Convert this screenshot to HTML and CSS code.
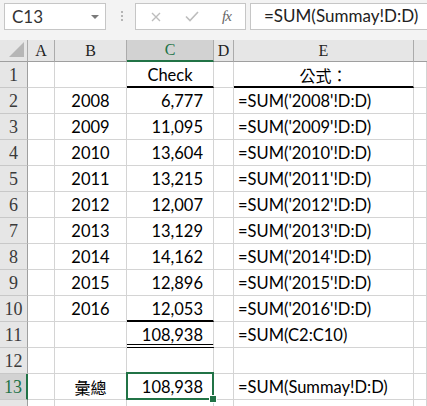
FILE: index.html
```html
<!DOCTYPE html>
<html lang="zh-Hant">

<head>
  <meta charset="UTF-8">
  <meta name="viewport" content="width=device-width, initial-scale=1.0">
  <title>彙總</title>
  <link rel="stylesheet" href="styles.css">
</head>

<body>
  <div class="formula-bar">
    <div class="name-box">
      <span>C13</span>
      <svg class="name-arrow" width="8" height="4" viewBox="0 0 8 4"><path d="M0 0h8L4 4z" fill="#7a7a7a"/></svg>
    </div>
    <svg class="grip" width="3" height="12" viewBox="0 0 3 12">
      <rect x="0" y="0" width="2" height="2" fill="#b5b5b5"/>
      <rect x="0" y="4" width="2" height="2" fill="#b5b5b5"/>
      <rect x="0" y="8" width="2" height="2" fill="#b5b5b5"/>
    </svg>
    <div class="fx-buttons">
      <svg class="btn-cancel" width="10" height="10" viewBox="0 0 10 10">
        <path d="M1 1l8 8M9 1l-8 8" stroke="#bdbdbd" stroke-width="1.4" fill="none"/>
      </svg>
      <svg class="btn-enter" width="14" height="11" viewBox="0 0 14 11">
        <path d="M1 5.5l4 4L13 1" stroke="#bdbdbd" stroke-width="1.6" fill="none"/>
      </svg>
      <span class="btn-fx">fx</span>
    </div>
    <div class="formula-input">=SUM(Summay!D:D)</div>
  </div>

  <div class="sheet">
    <!-- column headers -->
    <div class="corner"><svg width="15" height="15" viewBox="0 0 15 15"><path d="M15 0v15H0z" fill="#b6b6b6"/></svg></div>
    <div class="col-head">A</div>
    <div class="col-head">B</div>
    <div class="col-head active">C</div>
    <div class="col-head">D</div>
    <div class="col-head">E</div>
    <div class="col-head last"></div>

    <!-- row 1 -->
    <div class="row-head">1</div>
    <div class="cell"></div>
    <div class="cell"></div>
    <div class="cell center line-bottom">Check</div>
    <div class="cell"></div>
    <div class="cell center cjk line-bottom">公式：</div>
    <div class="cell"></div>

    <div class="row-head">2</div>
    <div class="cell"></div>
    <div class="cell center">2008</div>
    <div class="cell num">6,777</div>
    <div class="cell"></div>
    <div class="cell">=SUM('2008'!D:D)</div>
    <div class="cell"></div>

    <div class="row-head">3</div>
    <div class="cell"></div>
    <div class="cell center">2009</div>
    <div class="cell num">11,095</div>
    <div class="cell"></div>
    <div class="cell">=SUM('2009'!D:D)</div>
    <div class="cell"></div>

    <div class="row-head">4</div>
    <div class="cell"></div>
    <div class="cell center">2010</div>
    <div class="cell num">13,604</div>
    <div class="cell"></div>
    <div class="cell">=SUM('2010'!D:D)</div>
    <div class="cell"></div>

    <div class="row-head">5</div>
    <div class="cell"></div>
    <div class="cell center">2011</div>
    <div class="cell num">13,215</div>
    <div class="cell"></div>
    <div class="cell">=SUM('2011'!D:D)</div>
    <div class="cell"></div>

    <div class="row-head">6</div>
    <div class="cell"></div>
    <div class="cell center">2012</div>
    <div class="cell num">12,007</div>
    <div class="cell"></div>
    <div class="cell">=SUM('2012'!D:D)</div>
    <div class="cell"></div>

    <div class="row-head">7</div>
    <div class="cell"></div>
    <div class="cell center">2013</div>
    <div class="cell num">13,129</div>
    <div class="cell"></div>
    <div class="cell">=SUM('2013'!D:D)</div>
    <div class="cell"></div>

    <div class="row-head">8</div>
    <div class="cell"></div>
    <div class="cell center">2014</div>
    <div class="cell num">14,162</div>
    <div class="cell"></div>
    <div class="cell">=SUM('2014'!D:D)</div>
    <div class="cell"></div>

    <div class="row-head">9</div>
    <div class="cell"></div>
    <div class="cell center">2015</div>
    <div class="cell num">12,896</div>
    <div class="cell"></div>
    <div class="cell">=SUM('2015'!D:D)</div>
    <div class="cell"></div>

    <div class="row-head">10</div>
    <div class="cell"></div>
    <div class="cell center">2016</div>
    <div class="cell num line-bottom">12,053</div>
    <div class="cell"></div>
    <div class="cell">=SUM('2016'!D:D)</div>
    <div class="cell"></div>

    <div class="row-head">11</div>
    <div class="cell"></div>
    <div class="cell"></div>
    <div class="cell num double-bottom">108,938</div>
    <div class="cell"></div>
    <div class="cell">=SUM(C2:C10)</div>
    <div class="cell"></div>

    <div class="row-head">12</div>
    <div class="cell"></div>
    <div class="cell"></div>
    <div class="cell"></div>
    <div class="cell"></div>
    <div class="cell"></div>
    <div class="cell"></div>

    <div class="row-head active">13</div>
    <div class="cell"></div>
    <div class="cell center cjk">彙總</div>
    <div class="cell num selected">108,938</div>
    <div class="cell"></div>
    <div class="cell">=SUM(Summay!D:D)</div>
    <div class="cell"></div>

    <!-- next row, only its top edge shows -->
    <div class="row-head"></div>
    <div class="cell"></div>
    <div class="cell"></div>
    <div class="cell"></div>
    <div class="cell"></div>
    <div class="cell"></div>
    <div class="cell"></div>
  </div>
</body>

</html>
```

FILE: styles.css
```css
* {
  box-sizing: border-box;
}

body {
  margin: 0;
  height: 100vh;
  overflow: hidden;
  background-color: #f3f3f3;
  font-family: Lato, "Noto Sans CJK TC", sans-serif;
}

/* name box + formula input */
.formula-bar {
  display: flex;
  align-items: flex-start;
  height: 40px;
  padding: 3px 0 0 4px;
}

.name-box {
  display: flex;
  align-items: center;
  justify-content: space-between;
  width: 102px;
  height: 27px;
  padding: 0 6px 0 7px;
  background-color: #fff;
  border: 1px solid #c6c6c6;
  font-size: 17px;
  color: #333;
}

.grip {
  margin: 8px 0 0 15px;
}

.fx-buttons {
  display: flex;
  align-items: center;
  width: 111px;
  height: 27px;
  margin-left: 11px;
  background-color: #fff;
  border: 1px solid #c6c6c6;
}

.btn-cancel {
  margin-left: 15px;
}

.btn-enter {
  margin-left: 24px;
}

.btn-fx {
  margin-left: 23px;
  font-family: "Liberation Serif", serif;
  font-style: italic;
  font-size: 15px;
  color: #666;
  letter-spacing: -1px;
}

.formula-input {
  flex-grow: 1;
  height: 27px;
  margin-left: 4px;
  margin-right: -10px;
  padding: 1px 0 0 13px;
  background-color: #fff;
  border: 1px solid #c6c6c6;
  font-size: 17px;
  color: #222;
  white-space: nowrap;
}

/* worksheet grid */
.sheet {
  display: grid;
  grid-template-columns: 28px 27px 72px 87px 20px 180px 1fr;
  grid-template-rows: 22px repeat(14, 26px);
  background-color: #fff;
}

.corner,
.col-head {
  display: flex;
  align-items: center;
  justify-content: center;
  background-color: #e6e6e6;
  border-right: 1px solid #ababab;
  border-bottom: 1px solid #9f9f9f;
  font-family: "Liberation Serif", serif;
  font-size: 16px;
  color: #222;
}

.corner {
  align-items: flex-end;
  justify-content: flex-end;
  padding: 0 3px 4px 0;
}

.col-head.last {
  border-right: none;
}

.col-head.active {
  background-color: #d2d2d2;
  color: #217346;
  border-bottom: 2px solid #217346;
}

.row-head {
  display: flex;
  align-items: center;
  justify-content: center;
  background-color: #e6e6e6;
  border-right: 1px solid #9f9f9f;
  border-bottom: 1px solid #c8c8c8;
  font-family: "Liberation Serif", serif;
  font-size: 18px;
  color: #3a3a3a;
  padding-top: 2px;
}

.row-head.active {
  background-color: #d2d2d2;
  color: #217346;
  border-right: 2px solid #217346;
}

.cell {
  display: flex;
  align-items: center;
  padding: 0 4px;
  border-right: 1px solid #d4d4d4;
  border-bottom: 1px solid #d4d4d4;
  font-size: 16.5px;
  color: #000;
  white-space: nowrap;
}

.cell.center {
  justify-content: center;
}

.cell.num {
  justify-content: flex-end;
  padding-right: 10px;
}

.cell.cjk {
  font-size: 16px;
}

.line-bottom {
  border-bottom: 2px solid #000;
  padding-top: 1px;
}

.double-bottom {
  border-bottom: 4px double #000;
  padding-top: 3px;
}

/* active cell outline with fill handle */
.selected {
  position: relative;
}

.selected::after {
  content: "";
  position: absolute;
  top: -2px;
  left: -1px;
  right: -1px;
  bottom: -1px;
  border: 2px solid #217346;
}

.selected::before {
  content: "";
  position: absolute;
  right: -4px;
  bottom: -4px;
  width: 6px;
  height: 6px;
  background-color: #217346;
  border: 1px solid #fff;
  z-index: 1;
}
```
